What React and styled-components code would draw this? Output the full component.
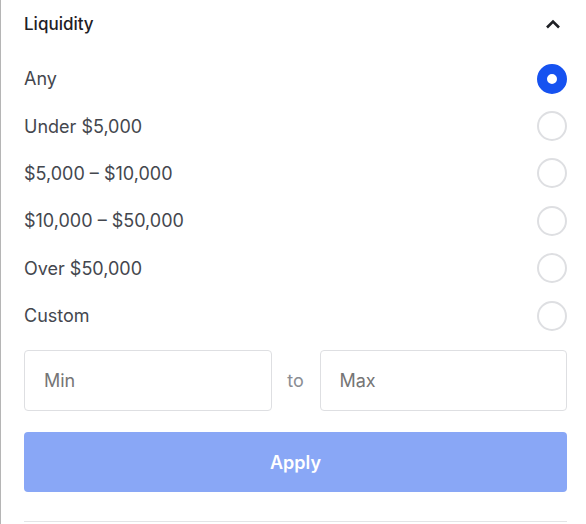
import React, { useState } from 'react';
import styled, { createGlobalStyle } from 'styled-components';

const GlobalStyle = createGlobalStyle`
    body {
        margin: 0;
        background: #fff;
        font-family: Inter, "Noto Sans", sans-serif;
    }
`;

const Panel = styled.div`
    width: 586px;
    height: 524px;
    box-sizing: border-box;
    border-left: 1px solid #b5b5b5;
    padding: 0 19px 0 23px;
    display: flex;
    flex-direction: column;
    overflow: hidden;
`;

const Header = styled.div`
    height: 48px;
    display: flex;
    align-items: center;
    justify-content: space-between;
    margin-bottom: 7px;
`;

const Title = styled.span`
    font-size: 17px;
    font-weight: 500;
    color: #1e2025;
`;

const Chevron = styled.svg`
    width: 16px;
    height: 10px;
    margin-right: 6px;
`;

const OptionList = styled.div`
    display: flex;
    flex-direction: column;
`;

const OptionRow = styled.label`
    height: 47.4px;
    display: flex;
    align-items: center;
    justify-content: space-between;
    cursor: pointer;
`;

const OptionLabel = styled.span`
    font-size: 18px;
    color: #44474e;
`;

const Radio = styled.span`
    width: 30px;
    height: 30px;
    box-sizing: border-box;
    border-radius: 50%;
    border: ${props => props.checked ? '10px solid #1652f0' : '2px solid #dedfe2'};
    background: #fff;
`;

const RangeRow = styled.div`
    display: flex;
    align-items: center;
    margin-top: 11px;
`;

const RangeInput = styled.input`
    flex: 1;
    min-width: 0;
    height: 61px;
    box-sizing: border-box;
    border: 1px solid #dedfe2;
    border-radius: 4px;
    padding: 0 19px;
    font-family: inherit;
    font-size: 18px;
    color: #3d4048;
    outline: none;
    ::placeholder {
        color: #8a8d93;
    }
`;

const ToLabel = styled.span`
    width: 48px;
    text-align: center;
    font-size: 18px;
    color: #8a8d93;
`;

const ApplyButton = styled.button`
    margin-top: 21px;
    height: 60px;
    border: none;
    border-radius: 4px;
    background: #89a7f6;
    color: #fff;
    font-family: inherit;
    font-size: 18px;
    font-weight: 600;
    cursor: not-allowed;
`;

const Divider = styled.div`
    margin-top: 29px;
    height: 1px;
    background: #e3e4e6;
`;

const options = ['Any', 'Under $5,000', '$5,000 – $10,000', '$10,000 – $50,000', 'Over $50,000', 'Custom'];

const App = () => {
    const [selected, setSelected] = useState(0);

    return (
        <>
            <GlobalStyle />
            <Panel>
                <Header>
                    <Title>Liquidity</Title>
                    <Chevron viewBox="0 0 16 10">
                        <path d="M2 8.5L8 2.5L14 8.5" fill="none" stroke="#1e2025" strokeWidth="2.6" />
                    </Chevron>
                </Header>
                <OptionList>
                    {options.map((v, index) => (
                        <OptionRow key={index} onClick={() => setSelected(index)}>
                            <OptionLabel>{v}</OptionLabel>
                            <Radio checked={selected === index} />
                        </OptionRow>
                    ))}
                </OptionList>
                <RangeRow>
                    <RangeInput placeholder="Min" />
                    <ToLabel>to</ToLabel>
                    <RangeInput placeholder="Max" />
                </RangeRow>
                <ApplyButton>Apply</ApplyButton>
                <Divider />
            </Panel>
        </>
    );
};

export default App;
